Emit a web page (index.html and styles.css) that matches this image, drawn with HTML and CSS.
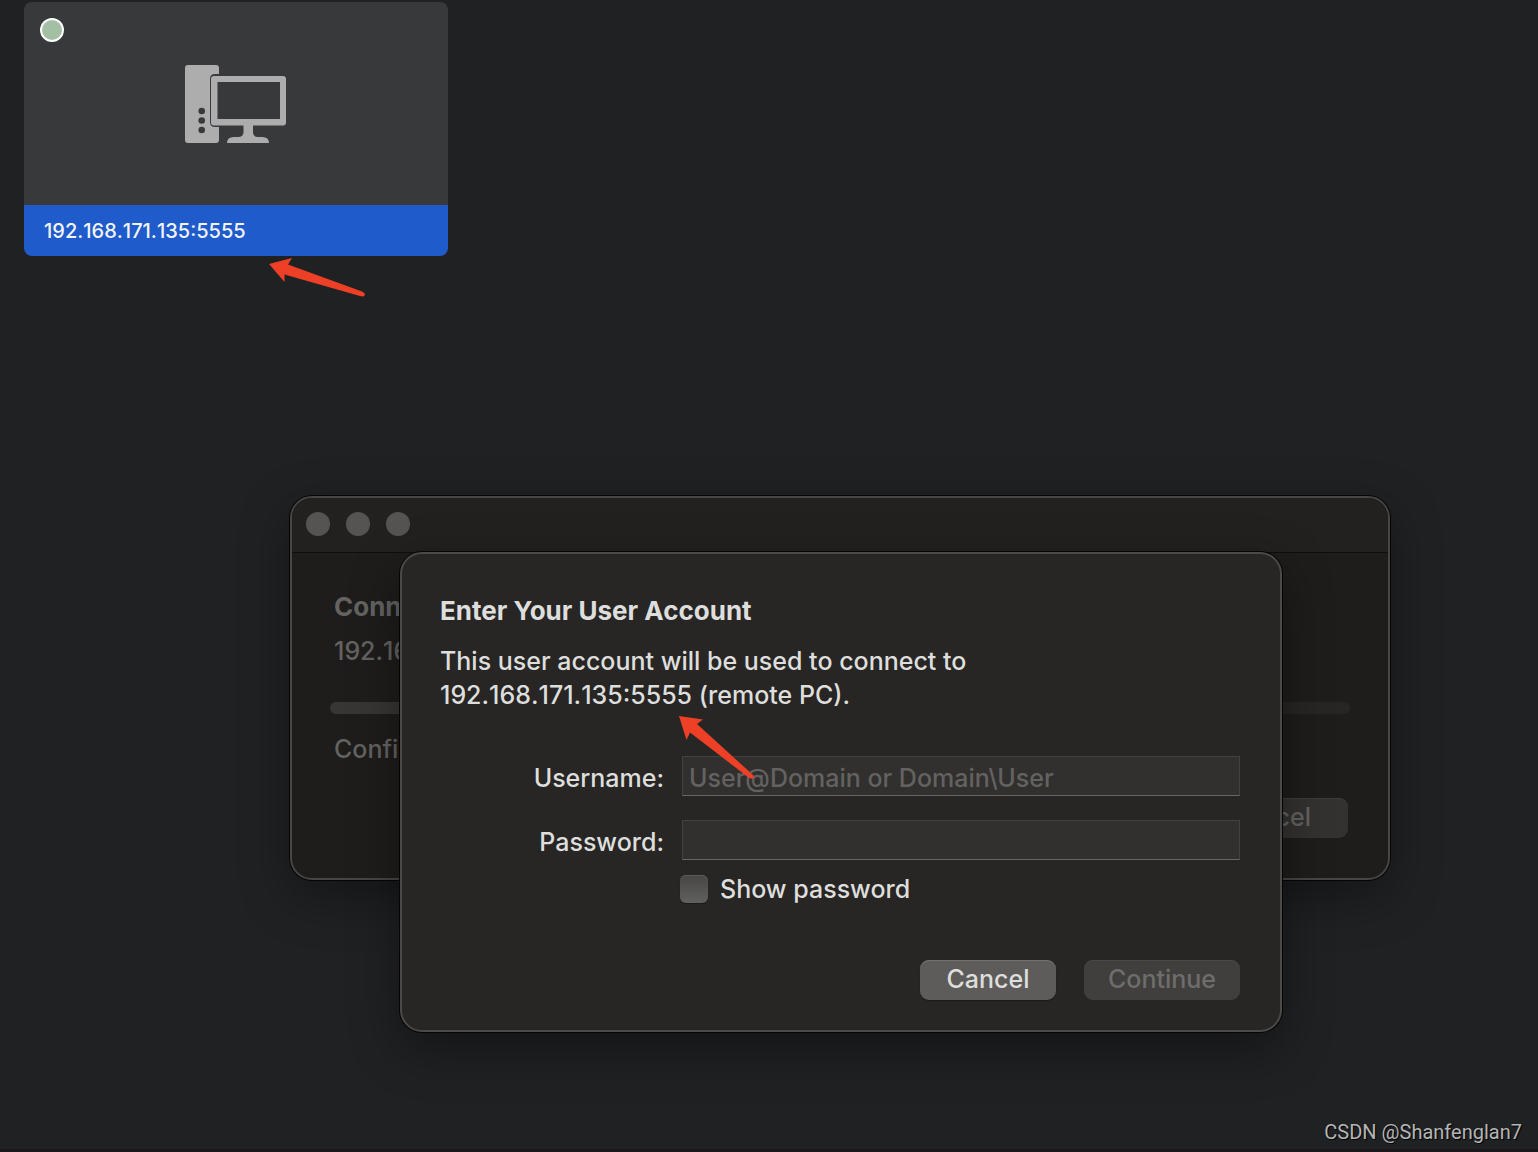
FILE: index.html
```html
<!DOCTYPE html>
<html lang="en">
<head>
  <meta charset="UTF-8">
  <meta name="viewport" content="width=device-width, initial-scale=1.0">
  <title>Remote Desktop</title>

  <link rel="stylesheet" href="styles.css">
</head>
<body>
  <main>
    <section id="pcs">
      <a href="#" class="pc">
        <div class="pc_preview">
          <span class="status"></span>
          <svg class="pc_icon" viewBox="0 0 102 79" width="102" height="79">
            <path fill="#adadad" d="M3 0H31Q34 0 34 3V9H30Q25 9 25 14V57Q25 62 30 62H34V75Q34 78 31 78H3Q0 78 0 75V3Q0 0 3 0Z"/>
            <g fill="#38393b">
              <circle cx="16.700" cy="46" r="3.3"/>
              <circle cx="16.700" cy="55.500" r="3.3"/>
              <circle cx="16.700" cy="65" r="3.3"/>
            </g>
            <path fill="#adadad" fill-rule="evenodd" d="M29 11H98Q101 11 101 14V57.500Q101 60.500 98 60.500H68V67Q68 72 73 72H77Q84 72 84 78H42Q42 72 49 72H53Q58.500 72 58.500 67V60.500H29Q26 60.500 26 57.500V14Q26 11 29 11ZM32.500 17V54H95V17Z"/>
          </svg>
        </div>
        <p class="pc_name address">192.168.171.135:5555</p>
      </a>
    </section>

    <section id="connection">
      <div class="titlebar">
        <button type="button" aria-label="Close"></button>
        <button type="button" aria-label="Minimize"></button>
        <button type="button" aria-label="Zoom"></button>
      </div>
      <div class="connection_body">
        <h2>Connecting to</h2>
        <p class="address">192.168.171.135:5555</p>
        <div class="progress"></div>
        <p>Configuring remote PC...</p>
        <button type="button" class="btn dimmed">Cancel</button>
      </div>

      <form id="account">
        <h1>Enter Your User Account</h1>
        <p>This user account will be used to connect to <span class="address">192.168.171.135:5555</span> (remote PC).</p>
        <div class="fields">
          <label for="username">Username:</label>
          <input type="text" id="username" placeholder="User@Domain or Domain\User">
          <label for="password">Password:</label>
          <input type="password" id="password">
          <div class="show">
            <input type="checkbox" id="show_password">
            <label for="show_password">Show password</label>
          </div>
        </div>
        <div class="actions">
          <button type="button" class="btn">Cancel</button>
          <button type="submit" class="btn" disabled>Continue</button>
        </div>
      </form>
    </section>

    <!-- red pointers over the addresses -->
    <svg class="arrow" id="arrow_pc" viewBox="0 0 98 40" width="98" height="40">
      <path fill="#ee4027" d="M1 6L24 0L20 6.500L94 33.500Q98 35.500 96.500 37.500Q95.500 39 92 38L16.500 16.500V24Z"/>
    </svg>
    <svg class="arrow" id="arrow_address" viewBox="0 0 76 64" width="76" height="64">
      <path fill="#ee4027" d="M0 0L24 3.500L18 8L74 59Q76 61 74 62.500Q72 63 69.500 61.500L11 16.500L7.500 24Z"/>
    </svg>

    <p id="watermark">CSDN @Shanfenglan7</p>
  </main>
</body>
</html>
```

FILE: styles.css
```css
*{
  margin: 0;
  padding: 0;
  box-sizing: border-box;
}
body{
  background-color: #202123;
  color: #dededd;
  font-family: 'Inter', 'Liberation Sans', sans-serif;
  font-size: 25px;
  font-weight: 500;
  line-height: 34px;
}
button, input{
  font: inherit;
  color: inherit;
  border: none;
}
h1, h2{
  font-size: 26px;
}
main{
  position: relative;
  min-height: 100vh;
  overflow: hidden;
  border-bottom: 3px solid #1b181a;
}
.address{
  font-kerning: none;
}
#pcs{
  display: flex;
  flex-wrap: wrap;
  gap: 24px;
  padding: 2px 24px;
}
.pc{
  width: 424px;
  border-radius: 8px;
  overflow: hidden;
  text-decoration: none;
  color: #f2f4f8;
}
.pc_preview{
  position: relative;
  display: flex;
  justify-content: center;
  align-items: center;
  height: 203px;
  padding-top: 2px;
  background-color: #38393b;
}
.status{
  position: absolute;
  top: 16px;
  left: 16px;
  width: 24px;
  height: 24px;
  border: 2px solid white;
  border-radius: 50%;
  background-color: #a4c0a4;
}
.pc_name{
  padding: 9px 20px 8px;
  background-color: #1f5bcb;
  font-size: 20px;
}
#connection{
  position: absolute;
  top: 496px;
  left: 290px;
  width: 1100px;
  height: 384px;
  border: 2px solid #474644;
  border-radius: 22px;
  background-color: #1e1d1b;
  box-shadow: 0 0 0 1px #050505, 0 16px 50px rgba(0, 0, 0, 0.35);
}
.titlebar{
  display: flex;
  gap: 16px;
  height: 55px;
  padding: 14px;
  border-radius: 20px 20px 0 0;
  border-bottom: 1px solid #0e0e0d;
  background-color: #22211f;
}
.titlebar button{
  width: 24px;
  height: 24px;
  border-radius: 50%;
  background-color: #555452;
}
.connection_body{
  display: flex;
  flex-direction: column;
  padding: 37px 40px 40px 42px;
  color: #646362;
}
.connection_body h2{
  margin-bottom: 10px;
}
.progress{
  height: 12px;
  margin: 34px -2px 18px -4px;
  border-radius: 6px;
  background: linear-gradient(to right, #373635 20%, #272625 80%);
}
.btn{
  min-width: 136px;
  height: 40px;
  padding: 0 23px 2px;
  border-radius: 9px;
  background-color: #5d5c5a;
  box-shadow: inset 0 1px #737270, 0 1px 1px rgba(0, 0, 0, 0.3);
}
.btn:disabled{
  min-width: 156px;
  background-color: #403f3d;
  box-shadow: inset 0 1px #4a4947;
  color: #6e6d6c;
}
.btn.dimmed{
  align-self: flex-end;
  margin-top: 32px;
  padding: 0 37px 2px;
  background-color: #333231;
  box-shadow: inset 0 1px #3e3d3c;
}
#account{
  position: absolute;
  top: 54px;
  left: 108px;
  width: 882px;
  padding: 40px 40px 30px 38px;
  border: 2px solid #4c4a48;
  border-radius: 22px;
  background-color: #272624;
  box-shadow: 0 0 0 1px #050505, 0 16px 50px rgba(0, 0, 0, 0.4);
}
#account h1{
  margin-bottom: 16px;
}
#account > p{
  max-width: 560px;
}
.fields{
  display: grid;
  grid-template-columns: 224px 1fr;
  column-gap: 18px;
  row-gap: 24px;
  align-items: center;
  margin-top: 44px;
}
.fields > label{
  padding-top: 4px;
  text-align: right;
}
.fields > input{
  width: 100%;
  height: 40px;
  padding: 4px 6px 0;
  border: 1px solid #42413f;
  border-bottom-color: #686765;
  background-color: #31302e;
}
.fields input::placeholder{
  color: #636261;
  opacity: 1;
}
.show{
  grid-column: 2;
  display: flex;
  align-items: center;
  gap: 12px;
  margin: -12px 0 0 -2px;
}
.show input{
  appearance: none;
  width: 28px;
  height: 28px;
  border-radius: 6px;
  background: linear-gradient(#474645, #60605e);
  box-shadow: inset 0 1px #5b5a58, 0 1px 1px rgba(0, 0, 0, 0.3);
}
.actions{
  display: flex;
  justify-content: flex-end;
  gap: 28px;
  margin-top: 54px;
}
.arrow{
  position: absolute;
  pointer-events: none;
}
#arrow_pc{
  top: 258px;
  left: 268px;
}
#arrow_address{
  top: 716px;
  left: 679px;
}
#watermark{
  position: absolute;
  right: 16px;
  bottom: 0;
  color: #b4b5b5;
  font-family: 'Roboto', 'Liberation Sans', sans-serif;
  font-size: 20px;
  font-weight: 400;
  text-shadow: 1px 1px 1px #000;
}
```
